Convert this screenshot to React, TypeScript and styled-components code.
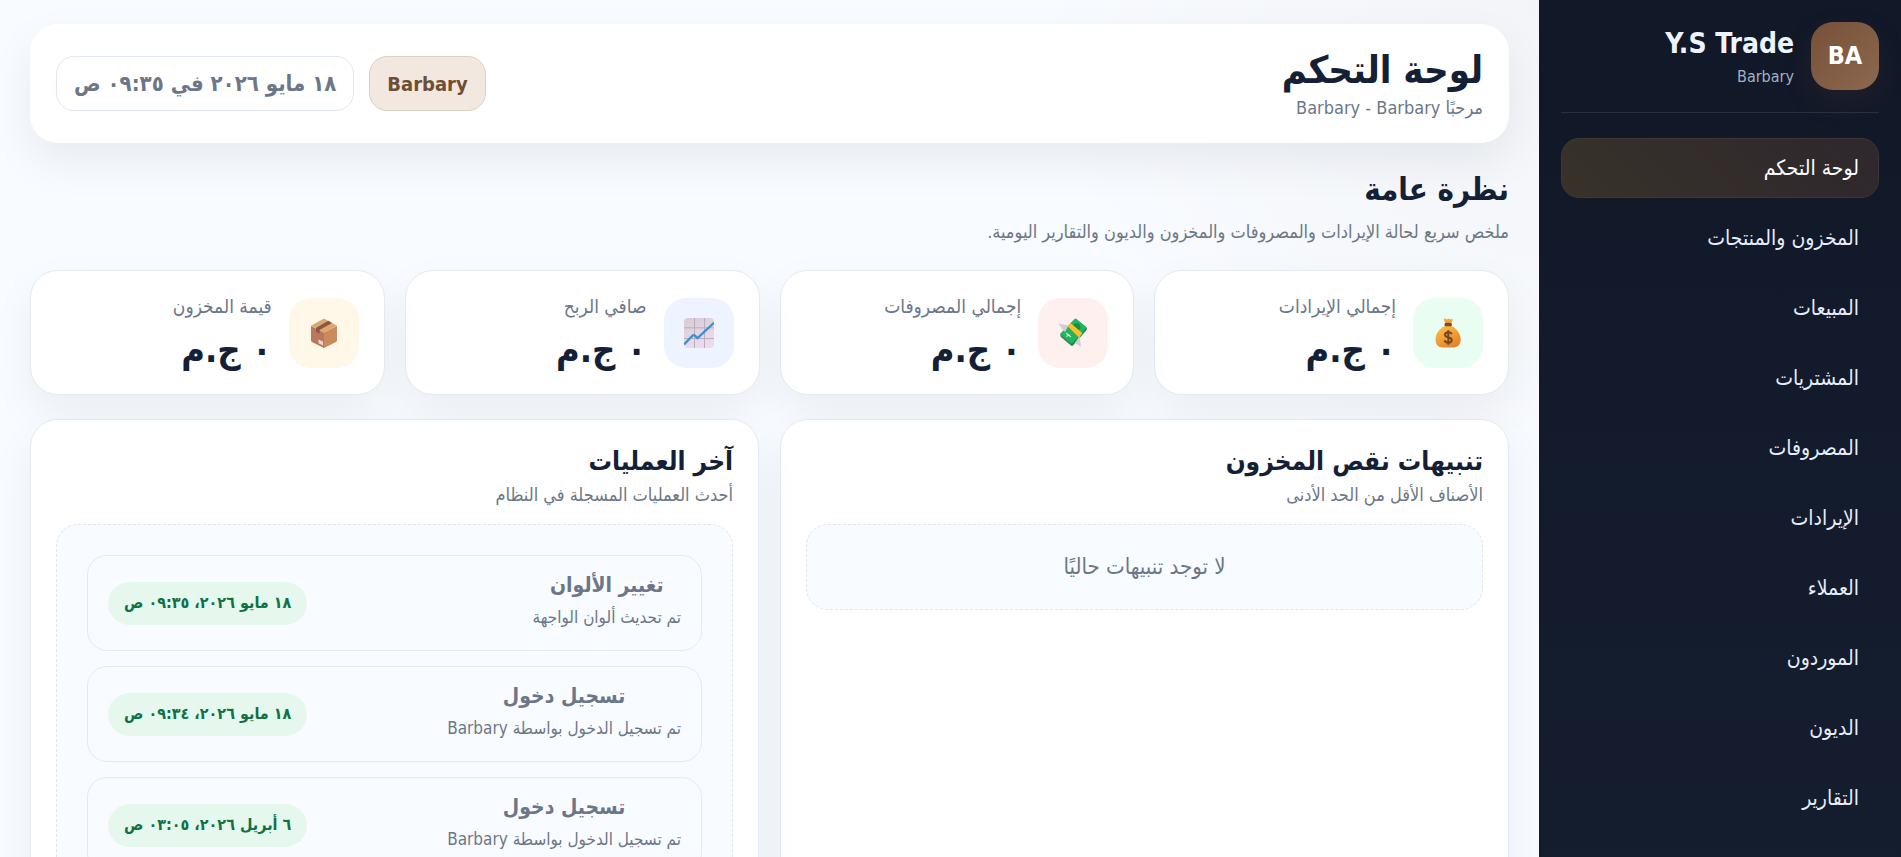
import React from "react";
import styled, { createGlobalStyle } from "styled-components";

const GlobalStyle = createGlobalStyle`
  *, *::before, *::after { box-sizing: border-box; }
  html { scrollbar-width: none; }
  body {
    margin: 0;
    color: #132035;
    background: #f8fbff;
    font-family: Tahoma, "DejaVu Sans Condensed", "DejaVu Sans", sans-serif;
    font-size: 18px;
    line-height: 28px;
  }
  h1, h2, h3, h4, p { margin: 0; }
`;

const Shell = styled.div`
  display: flex;
  align-items: stretch;
  min-height: 100vh;
`;

const Sidebar = styled.aside`
  flex: 0 0 362px;
  padding: 22px;
  background: linear-gradient(180deg, #111827 0%, #121a2b 35%, #151e2f 100%);
`;

const Brand = styled.div`
  display: flex;
  gap: 17px;
  padding-bottom: 20px;
  border-bottom: 1px solid rgba(255, 255, 255, 0.1);
`;

const Logo = styled.div`
  display: grid;
  place-items: center;
  width: 68px;
  height: 68px;
  border-radius: 22px;
  background: linear-gradient(135deg, #765138, #8d6850);
  box-shadow: 0 12px 30px rgba(118, 81, 56, 0.14);
  color: #fff;
  font-size: 25px;
  font-weight: 700;
`;

const BrandText = styled.div`
  padding-top: 4px;
`;

const BrandName = styled.div`
  color: #eef4ff;
  font-size: 28px;
  line-height: 36px;
  font-weight: 700;
`;

const BrandUser = styled.div`
  color: #a3afc2;
  font-size: 16px;
  line-height: 30px;
`;

const Nav = styled.nav`
  display: flex;
  flex-direction: column;
  gap: 10px;
  margin-top: 25px;
`;

const NavLink = styled.a<{ $active?: boolean }>`
  display: flex;
  align-items: center;
  height: 60px;
  padding: 0 19px;
  border: 1px solid ${(p) => (p.$active ? "#3c3934" : "transparent")};
  border-radius: 18px;
  background: ${(p) => (p.$active ? "linear-gradient(225deg, #2e272d, #38322a)" : "none")};
  color: ${(p) => (p.$active ? "#fff" : "#e6edfa")};
  font-size: 21px;
  text-decoration: none;
`;

const Main = styled.main`
  flex: 1;
  min-width: 0;
  padding: 24px 30px;
  background:
    radial-gradient(circle at top right, rgba(118, 81, 56, 0.04), transparent 28%),
    #f8fbff;
`;

const TopBar = styled.header`
  display: flex;
  align-items: center;
  justify-content: space-between;
  min-height: 119px;
  padding: 20px 26px;
  border-radius: 28px;
  background: #fff;
  box-shadow: 0 18px 45px rgba(15, 23, 42, 0.07);
`;

const PageTitle = styled.h1`
  font-size: 38px;
  line-height: 48px;
`;

const Muted = styled.p`
  color: #6b7788;
  font-size: 18px;
  line-height: 28px;
`;

const Chips = styled.div`
  display: flex;
  gap: 15px;
`;

const Chip = styled.span<{ $tone?: "brand" }>`
  display: flex;
  align-items: center;
  height: 55px;
  padding: 0 17px;
  border: 1px solid ${(p) => (p.$tone ? "#dccfc4" : "#e2e8f0")};
  border-radius: 18px;
  background: ${(p) => (p.$tone ? "#f3e8df" : "#fff")};
  color: ${(p) => (p.$tone ? "#6f4e37" : "#6b7788")};
  font-size: ${(p) => (p.$tone ? 20 : 22)}px;
  font-weight: 700;
`;

const Overview = styled.section`
  margin-top: 23px;
`;

const SectionTitle = styled.h2`
  font-size: 31px;
  line-height: 46px;
`;

const Intro = styled(Muted)`
  margin-top: 6px;
`;

const Stats = styled.div`
  display: grid;
  grid-template-columns: repeat(4, 1fr);
  gap: 20px;
  margin-top: 24px;
`;

const cardFrame = `
  border: 1px solid #e4eaf1;
  border-radius: 28px;
  background: #fff;
  box-shadow: 0 18px 45px rgba(15, 23, 42, 0.06);
`;

const StatCard = styled.article`
  ${cardFrame}
  display: flex;
  align-items: center;
  gap: 17px;
  height: 125px;
  padding: 0 25px;
`;

const StatIcon = styled.div<{ $bg: string }>`
  display: grid;
  place-items: center;
  flex: 0 0 70px;
  height: 70px;
  border-radius: 22px;
  background: ${(p) => p.$bg};
`;

const StatLabel = styled.p`
  color: #6b7788;
  font-size: 19px;
  line-height: 30px;
`;

const StatValue = styled.strong`
  display: block;
  padding-top: 4px;
  font-size: 36px;
  line-height: 50px;
`;

const Panels = styled.div`
  display: grid;
  grid-template-columns: 1fr 1fr;
  gap: 21px;
  margin-top: 24px;
`;

const Panel = styled.section`
  ${cardFrame}
  padding: 21px 25px 25px;
`;

const PanelTitle = styled.h3`
  font-size: 26px;
  line-height: 40px;
`;

const PanelNote = styled(Muted)``;

const Tray = styled.div`
  margin-top: 15px;
  padding: 30px;
  border: 1px dashed #dfe6ee;
  border-radius: 22px;
  background: #f8fbff;
  color: #6b7788;
`;

const EmptyTray = styled(Tray)`
  padding: 28px;
  font-size: 22px;
  text-align: center;
`;

const Log = styled.ul`
  display: flex;
  flex-direction: column;
  gap: 15px;
  margin: 0;
  padding: 0;
  list-style: none;
`;

const LogRow = styled.li`
  display: flex;
  align-items: center;
  justify-content: space-between;
  height: 96px;
  padding: 0 20px;
  border: 1px solid #e4eaf1;
  border-radius: 20px;
`;

const LogTitle = styled.h4`
  font-size: 21px;
  line-height: 32px;
  text-align: center;
`;

const LogNote = styled.p`
  padding-bottom: 4px;
  font-size: 17px;
  line-height: 32px;
`;

const Stamp = styled.time`
  display: flex;
  align-items: center;
  height: 43px;
  padding: 0 16px;
  border-radius: 22px;
  background: #e6f8ee;
  color: #0f7145;
  font-size: 16px;
  font-weight: 700;
`;

const MoneyBag = () => (
  <svg width="30" height="30" viewBox="0 0 30 30" aria-hidden="true">
    <defs>
      <linearGradient id="bag" x1="0" y1="0" x2="0.6" y2="1">
        <stop offset="0" stopColor="#fdc34a" />
        <stop offset="1" stopColor="#e8842c" />
      </linearGradient>
    </defs>
    <path d="M11 2.200Q10 .8 12 .6L14 1.400 15.600.4 17.500 1.400 19.500.9Q20.300 1.500 19.400 3L18.200 5H12.300Z" fill="#f4a83e" />
    <path d="M12 8C6 10.500 2.500 16 2.500 21.500 2.500 27 5.500 29.400 9.500 29.400H20.500C25 29.400 27.700 26.500 27.700 21.500 27.700 16 24 10.500 18.500 8Z" fill="url(#bag)" />
    <rect x="11.500" y="4.800" width="7.400" height="3.400" rx="1.500" fill="#7b4a35" />
    <path d="M18.700 16.200C18.200 14.700 16.900 14.200 15.300 14.200 13.200 14.200 12 15.200 12 16.800 12 20.500 18.800 18.300 18.800 22 18.800 23.700 17.400 24.700 15.300 24.700 13.400 24.700 12 23.900 11.600 22.300M15.300 12.300V26.700" fill="none" stroke="#754626" strokeWidth="2" />
  </svg>
);

const FlyingMoney = () => (
  <svg width="30" height="30" viewBox="0 0 30 30" aria-hidden="true">
    <path d="M2.500 16.500 16.500 1.500Q17.500.6 18.500 1.400L28.600 9.500Q29.300 10.500 28.600 12L15 27.500Q14 28.300 13 27.400L3 19Q2 17.800 2.500 16.500Z" fill="#158a4b" />
    <path d="M2.500 15.500 16.500.9Q17.500.1 18.500.9L28 8.700Q28.700 9.500 28 10.500L14.500 25.300Q13.500 26 12.500 25.200L3 17.300Q2 16.400 2.500 15.500Z" fill="#24b35f" />
    <circle cx="18.500" cy="9" r="3.800" fill="#178c4c" />
    <path d="m8 15 5 4M8.500 18.500l3-2" stroke="#bcf0c9" strokeWidth="1.300" fill="none" />
    <path d="M9.500 8 12.500 5 24.500 15.300 21 19.500Z" fill="#f8c22e" />
    <path d="M.5 5.500 10.500 7.500 7 14C5.500 13 5.800 11.500 3.500 10.500 3.800 8.500 1.300 8 .5 5.500Z" fill="#cfced6" />
    <path d="M23 29C20.500 28 20 25.800 16.500 25.500L21.500 18 23 29Z" fill="#cfced6" />
  </svg>
);

const Chart = () => (
  <svg width="30" height="30" viewBox="0 0 30 30" aria-hidden="true">
    <defs>
      <linearGradient id="sheet" x1="0" y1="0" x2="0.4" y2="1">
        <stop offset="0" stopColor="#d6ccd8" />
        <stop offset="1" stopColor="#eddbed" />
      </linearGradient>
    </defs>
    <rect width="30" height="30" rx="4" fill="url(#sheet)" />
    <path d="M10.500 0V30M20.500 0V30M0 9.800H30M0 20.500H30" stroke="#b9aebb" strokeWidth="1" />
    <path d="M0 26.500 8.500 17.700Q9.700 16.600 11 17.700L13.500 20.200 30 4.800" fill="none" stroke="#3e8fcb" strokeWidth="2.300" />
  </svg>
);

const Parcel = () => (
  <svg width="30" height="30" viewBox="0 0 30 30" aria-hidden="true">
    <path d="M2 8 15 14.500V30L3 24Q2 23.400 2 22.500Z" fill="#b9775b" />
    <path d="M28 8 15 14.500V30L27 24Q28 23.400 28 22.500Z" fill="#cb8a5b" />
    <path d="M15 .4 28 7.700 15 14.800 2 7.700Z" fill="#dba874" />
    <path d="m19.300 2.800 3.700 2.100L10.500 12v3.700L7 13.500V10Z" fill="#8a5647" />
    <path d="m9.500 21.500 4.500 2v4l-4.500-2.200Z" fill="#ecd4cb" />
  </svg>
);

const navItems = [
  "لوحة التحكم",
  "المخزون والمنتجات",
  "المبيعات",
  "المشتريات",
  "المصروفات",
  "الإيرادات",
  "العملاء",
  "الموردون",
  "الديون",
  "التقارير",
];

const stats = [
  { label: "إجمالي الإيرادات", bg: "#eafdf2", icon: <MoneyBag /> },
  { label: "إجمالي المصروفات", bg: "#fff0f0", icon: <FlyingMoney /> },
  { label: "صافي الربح", bg: "#edf3ff", icon: <Chart /> },
  { label: "قيمة المخزون", bg: "#fff7e8", icon: <Parcel /> },
];

const logs = [
  { title: "تغيير الألوان", note: "تم تحديث ألوان الواجهة", time: "١٨ مايو ٢٠٢٦، ٠٩:٣٥ ص" },
  { title: "تسجيل دخول", note: "تم تسجيل الدخول بواسطة Barbary", time: "١٨ مايو ٢٠٢٦، ٠٩:٣٤ ص" },
  { title: "تسجيل دخول", note: "تم تسجيل الدخول بواسطة Barbary", time: "٦ أبريل ٢٠٢٦، ٠٣:٠٥ ص" },
];

export default function App() {
  return (
    <Shell dir="rtl" lang="ar">
      <GlobalStyle />
      <Sidebar>
        <Brand>
          <Logo>BA</Logo>
          <BrandText>
            <BrandName>Y.S Trade</BrandName>
            <BrandUser>Barbary</BrandUser>
          </BrandText>
        </Brand>
        <Nav>
          {navItems.map((item, i) => (
            <NavLink key={item} href="#" $active={i === 0}>
              {item}
            </NavLink>
          ))}
        </Nav>
      </Sidebar>
      <Main>
        <TopBar>
          <div>
            <PageTitle>لوحة التحكم</PageTitle>
            <Muted>مرحبًا Barbary - Barbary</Muted>
          </div>
          <Chips>
            <Chip $tone="brand">Barbary</Chip>
            <Chip>١٨ مايو ٢٠٢٦ في ٠٩:٣٥ ص</Chip>
          </Chips>
        </TopBar>
        <Overview>
          <SectionTitle>نظرة عامة</SectionTitle>
          <Intro>ملخص سريع لحالة الإيرادات والمصروفات والمخزون والديون والتقارير اليومية.</Intro>
          <Stats>
            {stats.map((s) => (
              <StatCard key={s.label}>
                <StatIcon $bg={s.bg}>{s.icon}</StatIcon>
                <div>
                  <StatLabel>{s.label}</StatLabel>
                  <StatValue>٠ ج.م</StatValue>
                </div>
              </StatCard>
            ))}
          </Stats>
        </Overview>
        <Panels>
          <Panel>
            <PanelTitle>تنبيهات نقص المخزون</PanelTitle>
            <PanelNote>الأصناف الأقل من الحد الأدنى</PanelNote>
            <EmptyTray>لا توجد تنبيهات حاليًا</EmptyTray>
          </Panel>
          <Panel>
            <PanelTitle>آخر العمليات</PanelTitle>
            <PanelNote>أحدث العمليات المسجلة في النظام</PanelNote>
            <Tray>
              <Log>
                {logs.map((l) => (
                  <LogRow key={l.time}>
                    <div>
                      <LogTitle>{l.title}</LogTitle>
                      <LogNote>{l.note}</LogNote>
                    </div>
                    <Stamp>{l.time}</Stamp>
                  </LogRow>
                ))}
              </Log>
            </Tray>
          </Panel>
        </Panels>
      </Main>
    </Shell>
  );
}
